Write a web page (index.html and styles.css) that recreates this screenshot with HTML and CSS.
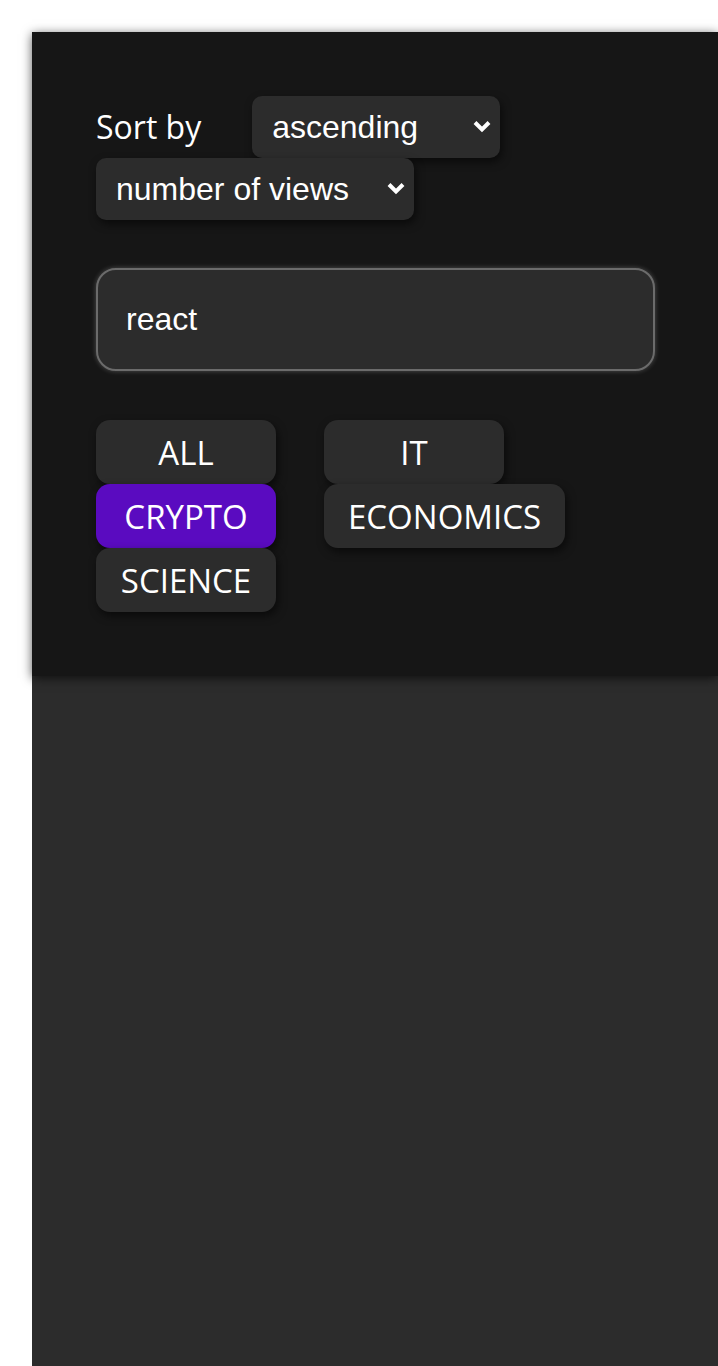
FILE: index.html
```html
<!DOCTYPE html>
<html>
<head>
<meta charset="utf-8">
<link rel="stylesheet" href="styles.css">
</head>
<body>
<div class="app">
  <div class="panel">
    <div class="sort">
      <span class="sort-label">Sort by</span>
      <div class="select-wrap select-order">
        <select class="select">
          <option>ascending</option>
          <option>descending</option>
        </select>
        <svg class="chevron" width="20" height="14" viewBox="0 0 20 14"><path d="M3 3.5 L10 10.5 L17 3.5" fill="none" stroke="#fff" stroke-width="4"/></svg>
      </div>
      <div class="select-wrap select-field">
        <select class="select">
          <option>number of views</option>
          <option>date</option>
        </select>
        <svg class="chevron" width="20" height="14" viewBox="0 0 20 14"><path d="M3 3.5 L10 10.5 L17 3.5" fill="none" stroke="#fff" stroke-width="4"/></svg>
      </div>
    </div>
    <input class="search" type="text" value="react">
    <div class="categories">
      <button class="cat">ALL</button>
      <button class="cat">IT</button>
      <button class="cat active">CRYPTO</button>
      <button class="cat">ECONOMICS</button>
      <button class="cat">SCIENCE</button>
    </div>
  </div>
</div>
</body>
</html>
```

FILE: styles.css
```css
html, body {
  margin: 0;
  padding: 0;
  background: #ffffff;
}

.app {
  margin: 32px 0 0 32px;
  min-height: calc(100vh - 32px);
  background: #2c2c2c;
}

.panel {
  background: #161616;
  padding: 64px;
  box-shadow: 0 2px 10px rgba(0, 0, 0, 0.65);
  position: relative;
}

.sort {
  display: flex;
  flex-wrap: wrap;
  align-items: center;
  width: 420px;
}

.sort-label {
  font-family: "Open Sans", sans-serif;
  font-size: 32px;
  color: #ffffff;
  margin-right: 51px;
  line-height: 62px;
}

.select-wrap {
  position: relative;
  height: 62px;
}

.select-order { width: 248px; }
.select-field { width: 318px; }

.select {
  -webkit-appearance: none;
  appearance: none;
  width: 100%;
  height: 62px;
  box-sizing: border-box;
  border: none;
  border-radius: 10px;
  background: #2c2c2c;
  color: #ffffff;
  font-family: "Liberation Sans", Arial, sans-serif;
  font-size: 32px;
  padding: 0 40px 0 20px;
  box-shadow: 2px 4px 8px rgba(0, 0, 0, 0.55);
  outline: none;
}

.chevron {
  position: absolute;
  right: 8px;
  top: 23px;
  pointer-events: none;
}

.search {
  display: block;
  margin-top: 48px;
  width: 559px;
  height: 103px;
  box-sizing: border-box;
  background: #2c2c2c;
  border: 2px solid #6b6b6b;
  border-radius: 20px;
  box-shadow: 0 0 5px rgba(255, 255, 255, 0.25);
  color: #ffffff;
  font-family: "Liberation Sans", Arial, sans-serif;
  font-size: 32px;
  padding: 0 28px;
  outline: none;
}

.categories {
  margin-top: 49px;
  display: grid;
  grid-template-columns: 228px auto;
  justify-items: start;
}

.cat {
  min-width: 180px;
  height: 64px;
  padding: 0 24px;
  border: none;
  border-radius: 14px;
  background: #2c2c2c;
  color: #ffffff;
  font-family: "Open Sans", sans-serif;
  font-size: 33px;
  box-shadow: 2px 4px 8px rgba(0, 0, 0, 0.55);
  cursor: pointer;
}

.cat.active {
  background: #5a0bc0;
}
```
